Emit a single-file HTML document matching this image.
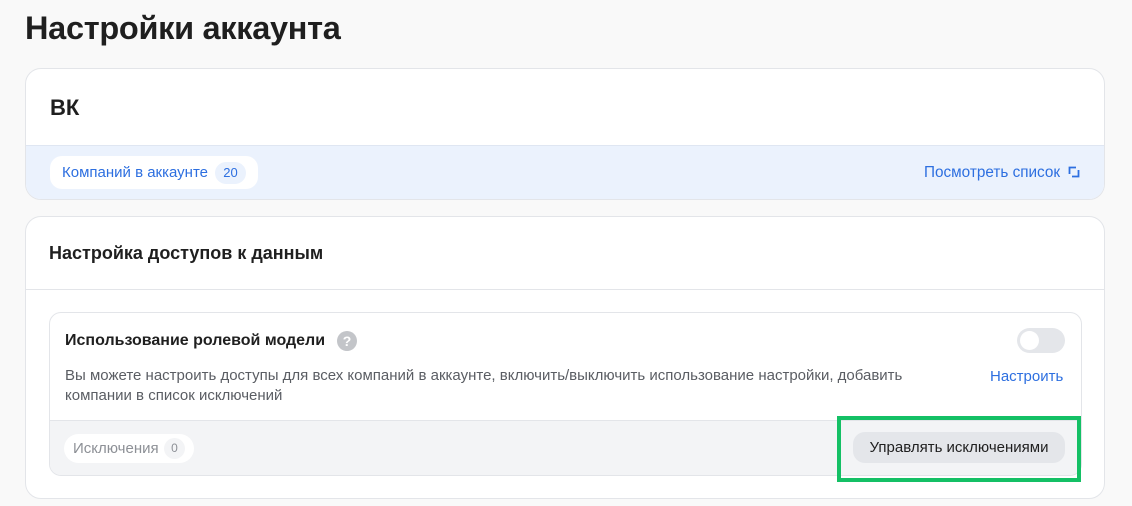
<!DOCTYPE html>
<html><head><meta charset="utf-8"><style>
*{box-sizing:border-box;margin:0;padding:0}
body{width:1132px;height:506px;overflow:hidden;background:#f9f9f9;font-family:"Liberation Sans",sans-serif;color:#1f1f1f;position:relative}
.a{position:absolute;white-space:nowrap}
h1{position:absolute;left:25px;top:10px;font-size:32.5px;font-weight:bold;letter-spacing:-0.3px}
.card{position:absolute;background:#fff;border:1px solid #e3e5e9;border-radius:16px;overflow:hidden}
</style></head><body>
<h1>Настройки аккаунта</h1>
<div class="card" style="left:25px;top:68px;width:1080px;height:132px">
 <div class="a" style="left:24px;top:26px;font-size:22px;font-weight:bold">ВК</div>
 <div class="a" style="left:0;top:76px;width:1080px;height:56px;background:#ebf2fd;border-top:1px solid #dfe6f2"></div>
 <div class="a" style="left:24px;top:87px;width:208px;height:33px;background:#fff;border-radius:12px"></div>
 <div class="a" style="left:36px;top:95px;font-size:15px;color:#2d6fe0">Компаний в аккаунте</div>
 <div class="a" style="left:189px;top:93px;width:31px;height:22px;border-radius:11px;background:#ebf2fd;font-size:13px;color:#2d6fe0;text-align:center;line-height:22px">20</div>
 <div class="a" style="left:898px;top:95px;font-size:15.3px;color:#2d6fe0">Посмотреть список</div>
 <svg class="a" style="left:1042px;top:97px" width="12" height="12" viewBox="0 0 12 12"><path d="M1.5 8V1.5H8M10.5 4v6.5H4" fill="none" stroke="#2d6fe0" stroke-width="1.8"/></svg>
</div>
<div class="card" style="left:25px;top:216px;width:1080px;height:283px">
 <div class="a" style="left:23px;top:26px;font-size:18px;font-weight:bold">Настройка доступов к данным</div>
 <div class="a" style="left:0;top:72px;width:1080px;height:1px;background:#e3e5e9"></div>
 <div class="a" style="left:23px;top:95px;width:1033px;height:164px;border:1px solid #e3e5e9;border-radius:12px;overflow:hidden">
  <div class="a" style="left:15px;top:19px;font-size:16px;font-weight:bold">Использование ролевой модели</div>
  <div class="a" style="left:287px;top:18px;width:20px;height:20px;border-radius:50%;background:#c3c5c9;color:#fff;font-size:14px;font-weight:bold;text-align:center;line-height:20px">?</div>
  <div class="a" style="left:967px;top:15px;width:48px;height:25px;border-radius:13px;background:#e4e6ea"></div>
  <div class="a" style="left:970px;top:18px;width:19px;height:19px;border-radius:50%;background:#fff"></div>
  <div class="a" style="left:15px;top:53px;font-size:15px;color:#5a5d63;line-height:20px;width:900px">Вы можете настроить доступы для всех компаний в аккаунте, включить/выключить использование настройки, добавить<br>компании в список исключений</div>
  <div class="a" style="left:940px;top:55px;font-size:15px;color:#2d6fe0">Настроить</div>
  <div class="a" style="left:0;top:107px;width:1033px;height:57px;background:#f3f4f6;border-top:1px solid #e3e5e9"></div>
  <div class="a" style="left:14px;top:121px;width:130px;height:29px;border-radius:15px;background:#fff"></div>
  <div class="a" style="left:23px;top:127px;font-size:15px;color:#8d9096">Исключения</div>
  <div class="a" style="left:114px;top:125px;width:21px;height:21px;border-radius:11px;background:#f3f4f6;font-size:12px;color:#8d9096;text-align:center;line-height:21px">0</div>
  <div class="a" style="left:803px;top:119px;width:212px;height:31px;border-radius:12px;background:#e4e6ea;font-size:15px;text-align:center;line-height:31px;color:#1f1f1f">Управлять исключениями</div>
 </div>
</div>
<div class="a" style="left:837px;top:416px;width:244px;height:66px;border:4px solid #14c065"></div>
</body></html>
